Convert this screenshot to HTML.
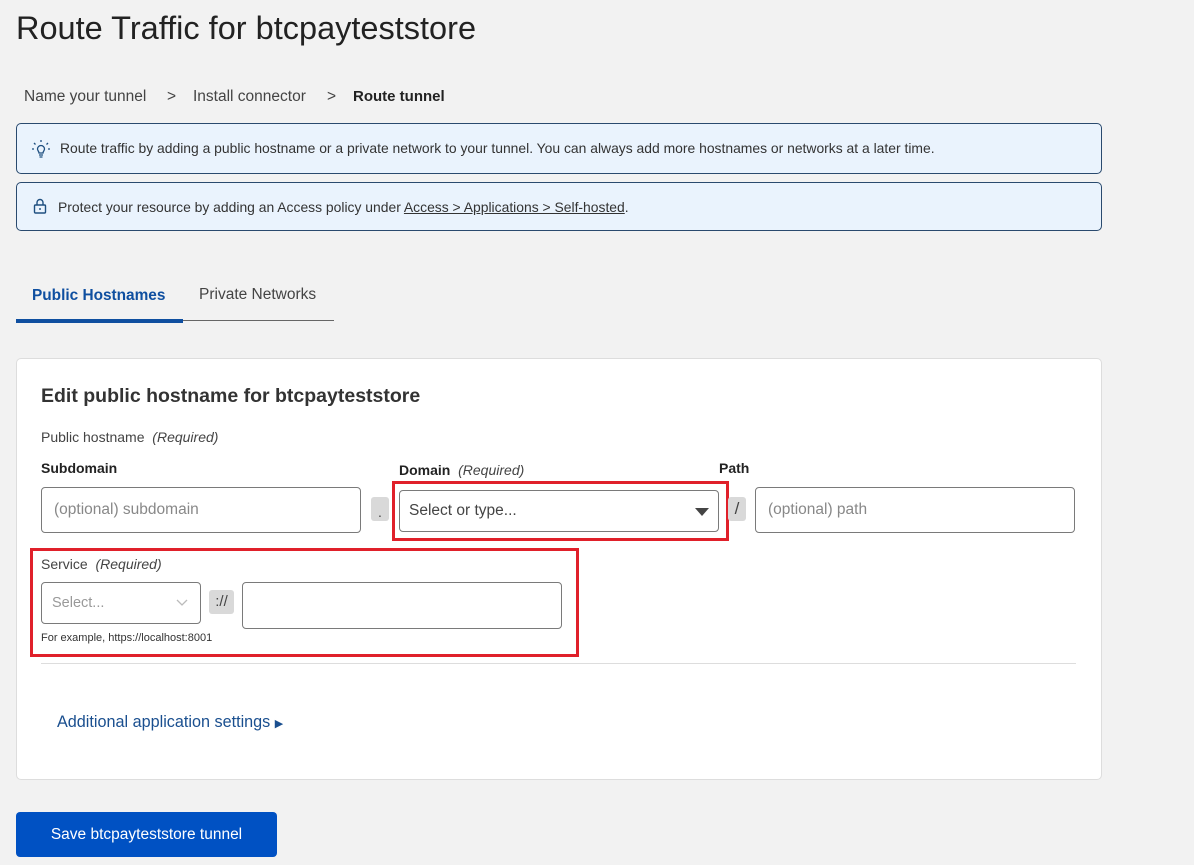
<!DOCTYPE html><html><head><style>
body{margin:0;width:1194px;height:865px;background:#f2f2f2;font-family:"Liberation Sans",sans-serif;color:#313131;position:relative;overflow:hidden}
.a{position:absolute}
.box{position:absolute;left:16px;width:1084px;background:#eaf3fd;border:1px solid #2a4a6e;border-radius:5px;font-size:13.9px;color:#333}
.inp{position:absolute;background:#fff;border:1px solid #7a7a7a;border-radius:4px;box-sizing:border-box;font-size:15.5px;color:#888;padding-left:12px;display:flex;align-items:center}
.tag{position:absolute;background:#d9d9d9;border-radius:3px;font-size:14px;color:#444;text-align:center}
.red{position:absolute;border:3px solid #e0202a;box-sizing:border-box}
.bc{position:absolute;top:88px;font-size:15.5px;color:#444}
</style></head><body>
<div class="a" style="left:16px;top:10px;font-size:32.5px;color:#222">Route Traffic for btcpayteststore</div>
<div class="bc" style="left:24px">Name your tunnel</div>
<div class="bc" style="left:167px">&gt;</div>
<div class="bc" style="left:193px">Install connector</div>
<div class="bc" style="left:327px">&gt;</div>
<div class="bc" style="left:353px;font-weight:bold;color:#222;font-size:15px">Route tunnel</div>
<div class="box" style="top:123px;height:49px"><svg class="a" style="left:14px;top:15px" width="20" height="20" viewBox="0 0 20 20" fill="none" stroke="#1f4f80" stroke-width="1.3"><path d="M10 1v2M3 4l1.5 1.5M17 4l-1.5 1.5M1 10h2M17 10h2"/><path d="M6.5 10a3.5 3.5 0 1 1 7 0c0 1.5-1.5 2.5-1.5 4h-4c0-1.5-1.5-2.5-1.5-4z"/><path d="M8 16h4M8.5 18h3"/></svg><span class="a" style="left:43px;top:16px">Route traffic by adding a public hostname or a private network to your tunnel. You can always add more hostnames or networks at a later time.</span></div>
<div class="box" style="top:182px;height:47px"><svg class="a" style="left:16px;top:15px" width="14" height="16" viewBox="0 0 14 16" fill="none" stroke="#1f4f80" stroke-width="1.4"><rect x="1.5" y="7" width="11" height="8" rx="1"/><path d="M4 7V4.5a3 3 0 0 1 6 0V7"/><path d="M7 10v2"/></svg><span class="a" style="left:41px;top:16px">Protect your resource by adding an Access policy under <u>Access &gt; Applications &gt; Self-hosted</u>.</span></div>
<div class="a" style="left:32px;top:287px;font-size:15.4px;font-weight:bold;color:#0f4fa0">Public Hostnames</div>
<div class="a" style="left:199px;top:286px;font-size:15.5px;color:#444">Private Networks</div>
<div class="a" style="left:16px;top:320px;width:318px;height:1px;background:#666"></div>
<div class="a" style="left:16px;top:319px;width:167px;height:4px;background:#0f4fa0"></div>
<div class="a" style="left:16px;top:358px;width:1084px;height:420px;background:#fff;border:1px solid #ddd;border-radius:5px"></div>
<div class="a" style="left:41px;top:385px;font-size:19.5px;font-weight:bold;color:#333">Edit public hostname for btcpayteststore</div>
<div class="a" style="left:41px;top:429px;font-size:14px;color:#444">Public hostname &nbsp;<i>(Required)</i></div>
<div class="a" style="left:41px;top:460px;font-size:14px;font-weight:bold;color:#222">Subdomain</div>
<div class="a" style="left:399px;top:462px;font-size:14px;color:#222"><b>Domain</b> &nbsp;<i style="color:#444">(Required)</i></div>
<div class="a" style="left:719px;top:460px;font-size:14px;font-weight:bold;color:#222">Path</div>
<div class="inp" style="left:41px;top:487px;width:320px;height:46px">(optional) subdomain</div>
<div class="tag" style="left:371px;top:497px;width:18px;height:24px;line-height:30px">.</div>
<div class="inp" style="left:399px;top:490px;width:320px;height:42px;color:#444;padding-left:9px">Select or type...<span class="a" style="right:9px;top:17px;width:0;height:0;border-left:7px solid transparent;border-right:7px solid transparent;border-top:8px solid #444"></span></div>
<div class="red" style="left:392px;top:481px;width:337px;height:60px"></div>
<div class="tag" style="left:728px;top:497px;width:18px;height:24px;line-height:24px;font-size:17px">/</div>
<div class="inp" style="left:755px;top:487px;width:320px;height:46px">(optional) path</div>
<div class="red" style="left:30px;top:548px;width:549px;height:109px"></div>
<div class="a" style="left:41px;top:556px;font-size:14px;color:#444">Service &nbsp;<i>(Required)</i></div>
<div class="inp" style="left:41px;top:582px;width:160px;height:42px;color:#999;font-size:14.5px;padding-left:10px">Select...<svg class="a" style="left:134px;top:16px" width="12" height="8" viewBox="0 0 12 8" fill="none" stroke="#bbb" stroke-width="1.3"><path d="M1 1l5 5 5-5"/></svg></div>
<div class="tag" style="left:209px;top:590px;width:25px;height:24px;line-height:24px;font-size:15px">://</div>
<div class="inp" style="left:242px;top:582px;width:320px;height:47px"></div>
<div class="a" style="left:41px;top:632px;font-size:11px;color:#333">For example, https://localhost:8001</div>
<div class="a" style="left:41px;top:663px;width:1035px;height:1px;background:#ddd"></div>
<div class="a" style="left:57px;top:713px;font-size:16.2px;color:#1a4f8f">Additional application settings <span style="font-size:11px">▶</span></div>
<div class="a" style="left:16px;top:812px;width:261px;height:45px;background:#0051c3;border-radius:4px;color:#fff;font-size:15.5px;text-align:center;line-height:45px">Save btcpayteststore tunnel</div>
</body></html>
